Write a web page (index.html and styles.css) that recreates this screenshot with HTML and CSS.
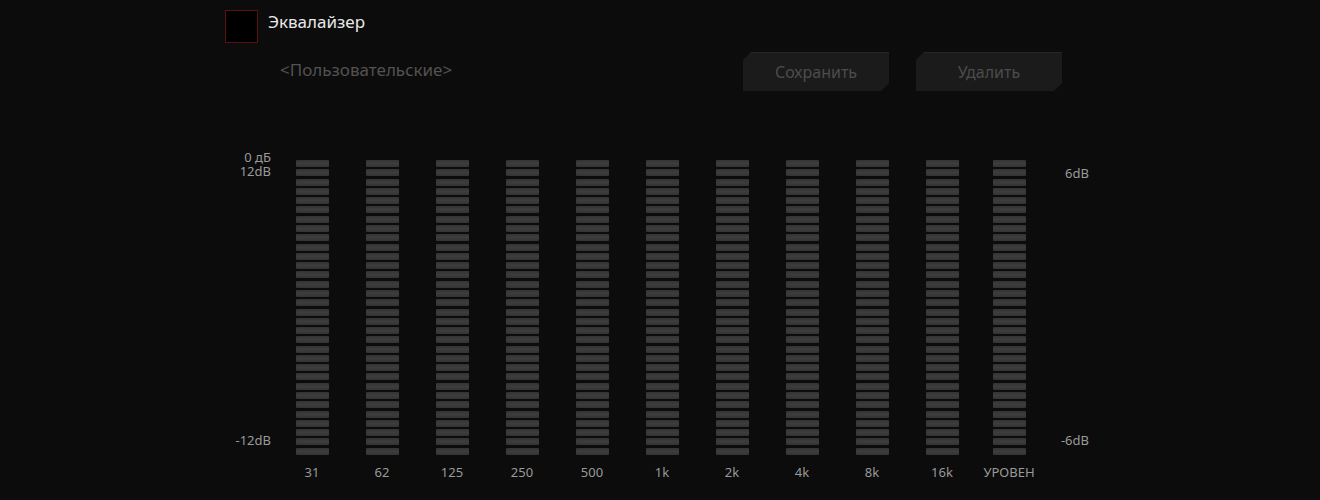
FILE: index.html
```html
<!DOCTYPE html>
<html lang="ru">
<head>
  <meta charset="UTF-8" />
  <title>Эквалайзер</title>
  <link rel="stylesheet" href="styles.css">
</head>
<body>
  <div class="page">
    <label class="eq-toggle">
      <span class="checkbox"></span>
      <span class="eq-title">Эквалайзер</span>
    </label>

    <div class="preset-row">
      <span class="preset-name">&lt;Пользовательские&gt;</span>
      <div class="buttons">
        <button class="btn">Сохранить</button>
        <button class="btn">Удалить</button>
      </div>
    </div>

    <div class="eq">
      <div class="scale scale-left">
        <div class="scale-line">0 дБ</div>
        <div class="scale-line">12dB</div>
        <div class="scale-line scale-bottom">-12dB</div>
      </div>
      <div class="bands" id="bands"></div>
      <div class="scale scale-right">
        <div class="scale-line scale-top">6dB</div>
        <div class="scale-line scale-bottom">-6dB</div>
      </div>
    </div>
  </div>

  <script>
    const bandNames = ["31", "62", "125", "250", "500", "1k", "2k", "4k", "8k", "16k", "УРОВЕН"];
    const bandsEl = document.getElementById("bands");

    for (let i = 0; i < bandNames.length; i++) {
      const band = document.createElement("div");
      band.classList.add("band");
      if (i === bandNames.length - 1) band.classList.add("band-level");

      const bar = document.createElement("div");
      bar.classList.add("bar");
      for (let j = 0; j < 32; j++) {
        const seg = document.createElement("span");
        seg.classList.add("seg");
        bar.appendChild(seg);
      }

      const name = document.createElement("div");
      name.classList.add("band-name");
      name.textContent = bandNames[i];

      band.appendChild(bar);
      band.appendChild(name);
      bandsEl.appendChild(band);
    }
  </script>
</body>
</html>
```

FILE: styles.css
```css
body {
  margin: 0;
  background: #0c0c0c;
  font-family: "Noto Sans", "Open Sans", sans-serif;
  color: #999;
}

.page {
  padding: 10px 0 0 225px;
  width: 870px;
}

.eq-toggle {
  display: flex;
  align-items: center;
  gap: 10px;
  height: 33px;
}

.checkbox {
  width: 31px;
  height: 31px;
  border: 1px solid #5c1010;
  background: #000;
}

.eq-title {
  font-size: 17px;
  color: #e8e8e8;
  margin-top: -10px;
}

.preset-row {
  display: flex;
  align-items: center;
  width: 837px;
  height: 39px;
  margin-top: 9px;
}

.preset-name {
  margin-left: 55px;
  margin-top: -4px;
  font-size: 17px;
  color: #525252;
}

.buttons {
  display: flex;
  gap: 27px;
  margin-left: auto;
}

.btn {
  width: 146px;
  height: 39px;
  border: none;
  background: linear-gradient(to bottom, #262626 0, #262626 1px, #1b1b1b 1px);
  color: #4c4c4c;
  font-family: inherit;
  font-size: 16px;
  clip-path: polygon(8px 0, 100% 0, 100% calc(100% - 8px), calc(100% - 8px) 100%, 0 100%, 0 8px);
  padding: 0;
}

.eq {
  display: flex;
  margin-top: 59px;
}

.scale {
  display: flex;
  flex-direction: column;
  height: 305px;
  font-size: 13px;
  color: #9a9a9a;
}

.scale-line {
  height: 14px;
  line-height: 14px;
}

.scale-left {
  width: 46px;
  text-align: right;
}

.scale-right {
  width: 47px;
  text-align: right;
}

.scale-top {
  margin-top: 16px;
}

.scale-bottom {
  margin-top: auto;
  margin-bottom: 8px;
}

.bands {
  display: flex;
  margin-left: 6px;
}

.band {
  width: 70px;
  display: flex;
  flex-direction: column;
  align-items: center;
}

.band-level {
  width: 66px;
  margin-left: -1px;
}

.bar {
  width: 33px;
  height: 295px;
  margin-top: 10px;
  display: flex;
  flex-direction: column;
  justify-content: space-between;
}

.seg {
  display: block;
  height: 7px;
  border-radius: 1px;
  background: linear-gradient(to bottom, #333 0%, #3d3d3d 50%, #333 100%);
}

.band-name {
  margin-top: 10px;
  font-size: 13px;
  line-height: 14px;
  color: #9a9a9a;
}
```
